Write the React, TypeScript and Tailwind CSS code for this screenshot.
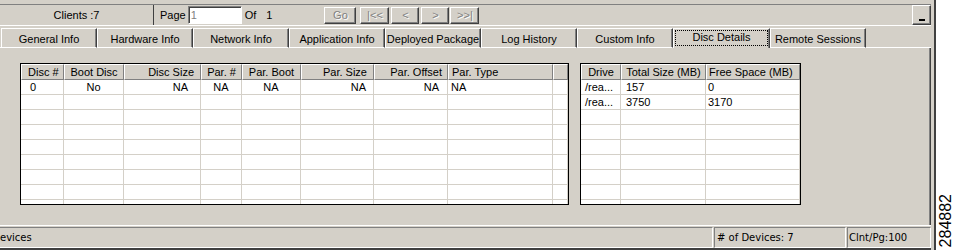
type Col = { label: string; head: string; cell: string };

const discCols: Col[] = [
  { label: "Disc #", head: "justify-start pl-[6px]", cell: "justify-start pl-[9px]" },
  { label: "Boot Disc", head: "justify-center", cell: "justify-center" },
  { label: "Disc Size", head: "justify-end pr-[6px]", cell: "justify-end pr-[12px]" },
  { label: "Par. #", head: "justify-center", cell: "justify-center" },
  { label: "Par. Boot", head: "justify-center", cell: "justify-center" },
  { label: "Par. Size", head: "justify-end pr-[6px]", cell: "justify-end pr-[7px]" },
  { label: "Par. Offset", head: "justify-end pr-[5px]", cell: "justify-end pr-[8px]" },
  { label: "Par. Type", head: "justify-start pl-[3px]", cell: "justify-start pl-[3px]" },
  { label: "", head: "", cell: "" },
];

const discRows = [["0", "No", "NA", "NA", "NA", "NA", "NA", "NA", ""]];

const driveCols: Col[] = [
  { label: "Drive", head: "justify-center", cell: "justify-start pl-[4px]" },
  { label: "Total Size (MB)", head: "justify-center", cell: "justify-start pl-[5px]" },
  { label: "Free Space (MB)", head: "justify-start pl-[2px]", cell: "justify-start pl-[2px]" },
];

const driveRows = [
  ["/rea...", "157", "0"],
  ["/rea...", "3750", "3170"],
];

const tabs = [
  "General Info",
  "Hardware Info",
  "Network Info",
  "Application Info",
  "Deployed Package",
  "Log History",
  "Custom Info",
  "Disc Details",
  "Remote Sessions",
];

const raised =
  "border-t border-l border-r border-b border-t-white border-l-white border-r-[#404040] border-b-[#404040] shadow-[inset_-1px_-1px_0_#808080]";

const NavButton = ({ label, className }: { label: string; className: string }) => (
  <div
    className={`flex h-[17px] items-center justify-center text-[#808080] [text-shadow:1px_1px_0_#fff] ${raised} ${className}`}
  >
    {label}
  </div>
);

const Grid = ({
  cols,
  rows,
  template,
  width,
}: {
  cols: Col[];
  rows: string[][];
  template: string;
  width: string;
}) => {
  const filled = [...rows];
  while (filled.length < 9) filled.push(cols.map(() => ""));

  return (
    <div className={`flex h-[142px] flex-col overflow-hidden border border-black bg-white ${width}`}>
      <div className={`grid ${template}`}>
        {cols.map((c, i) => (
          <div
            key={i}
            className={`flex h-[16px] items-center overflow-hidden whitespace-nowrap border-t border-l border-r border-b border-t-white border-l-white border-r-[#808080] border-b-[#808080] bg-[#d4d0c8] ${c.head}`}
          >
            {c.label}
          </div>
        ))}
      </div>
      {filled.map((r, ri) => (
        <div key={ri} className={`grid ${template}`}>
          {r.map((v, ci) => (
            <div
              key={ci}
              className={`flex h-[15px] items-center overflow-hidden whitespace-nowrap border-r border-b border-[#d4d0c8] ${cols[ci].cell}`}
            >
              {v}
            </div>
          ))}
        </div>
      ))}
    </div>
  );
};

export default function App() {
  return (
    <div className="flex h-[250px] w-[956px] overflow-hidden bg-white font-['Liberation_Sans',Arial,sans-serif] text-[11px] leading-none text-black">
      <div className="flex w-[936px] flex-col border-r-2 border-[#404040] bg-[#d4d0c8] pr-[3px]">
        <div className="h-[4px]" />

        {/* Toolbar */}
        <div className="flex h-[22px] items-center border-t border-b border-t-[#808080] border-b-white">
          <div className="flex h-full w-[154px] items-center justify-center border-r border-[#404040]">
            Clients :7
          </div>
          <span className="ml-[6px]">Page</span>
          <div className="ml-[2px] flex h-[18px] w-[54px] items-center border-t border-l border-r border-b border-t-[#808080] border-l-[#808080] border-r-white border-b-white bg-white pl-[2px] text-[#808080] shadow-[inset_1px_1px_0_#404040]">
            1
          </div>
          <span className="ml-[3px]">Of</span>
          <span className="ml-[10px]">1</span>
          <NavButton label="Go" className="ml-[52px] w-[32px]" />
          <NavButton label="|<<" className="ml-[4px] w-[29px]" />
          <NavButton label="<" className="ml-[2px] w-[28px]" />
          <NavButton label=">" className="ml-[2px] w-[28px]" />
          <NavButton label=">>|" className="ml-[1px] w-[29px]" />
          <div className="flex-1" />
          <div className={`flex h-[20px] w-[19px] items-end justify-center pb-[3px] ${raised}`}>
            <div className="h-[2px] w-[6px] bg-black" />
          </div>
        </div>

        <div className="h-[2px]" />

        {/* Tabs */}
        <div className="flex h-[20px] items-end">
          <div className="h-[20px] w-[1px] border-b border-white" />
          {tabs.map((t) =>
            t === "Disc Details" ? (
              <div
                key={t}
                className="flex h-[20px] w-[97px] border-t border-l border-r border-t-white border-l-white border-r-[#404040] p-[1px] pb-[2px] shadow-[inset_-1px_0_0_#808080]"
              >
                <div className="flex flex-1 items-center justify-center border border-dotted border-black pb-[1px]">
                  {t}
                </div>
              </div>
            ) : (
              <div
                key={t}
                className="flex h-[20px] w-[96px] items-center justify-center overflow-hidden whitespace-nowrap border-t border-l border-r border-b border-t-white border-l-white border-r-[#404040] border-b-white pt-[2px] shadow-[inset_-1px_0_0_#808080]"
              >
                {t}
              </div>
            )
          )}
          <div className="h-[20px] flex-1 border-b border-white" />
        </div>

        {/* Panel */}
        <div className="flex h-[177px] gap-[11px] border-r border-[#404040] pl-[20px] pt-[15px] shadow-[inset_-1px_0_0_#808080]">
          <Grid
            cols={discCols}
            rows={discRows}
            template="grid-cols-[43px_60px_77px_41px_59px_73px_74px_105px_15px]"
            width="w-[549px]"
          />
          <Grid
            cols={driveCols}
            rows={driveRows}
            template="grid-cols-[40px_85px_94px]"
            width="w-[221px]"
          />
        </div>

        {/* Status bar */}
        <div className="flex h-[25px] gap-[1px] border-t border-b-2 border-t-white border-b-[#404040] pt-[1px] font-['DejaVu_Sans',Verdana,sans-serif] text-[10px]">
          <div className="flex h-[21px] w-[713px] items-center border-r border-b border-r-white border-b-white border-t border-t-[#808080]">
            evices
          </div>
          <div className="flex h-[21px] w-[132px] items-center border-t border-l border-r border-b border-t-[#808080] border-l-[#808080] border-r-white border-b-white pl-[2px]">
            # of Devices: 7
          </div>
          <div className="flex h-[21px] w-[84px] items-center border-t border-l border-r border-b border-t-[#808080] border-l-[#808080] border-r-white border-b-white pl-[1px]">
            Clnt/Pg:100
          </div>
        </div>
      </div>

      {/* Figure number */}
      <div className="flex w-[20px] flex-col items-center justify-end pb-[3px]">
        <span className="rotate-180 text-[16px] leading-none [writing-mode:vertical-rl]">284882</span>
      </div>
    </div>
  );
}
